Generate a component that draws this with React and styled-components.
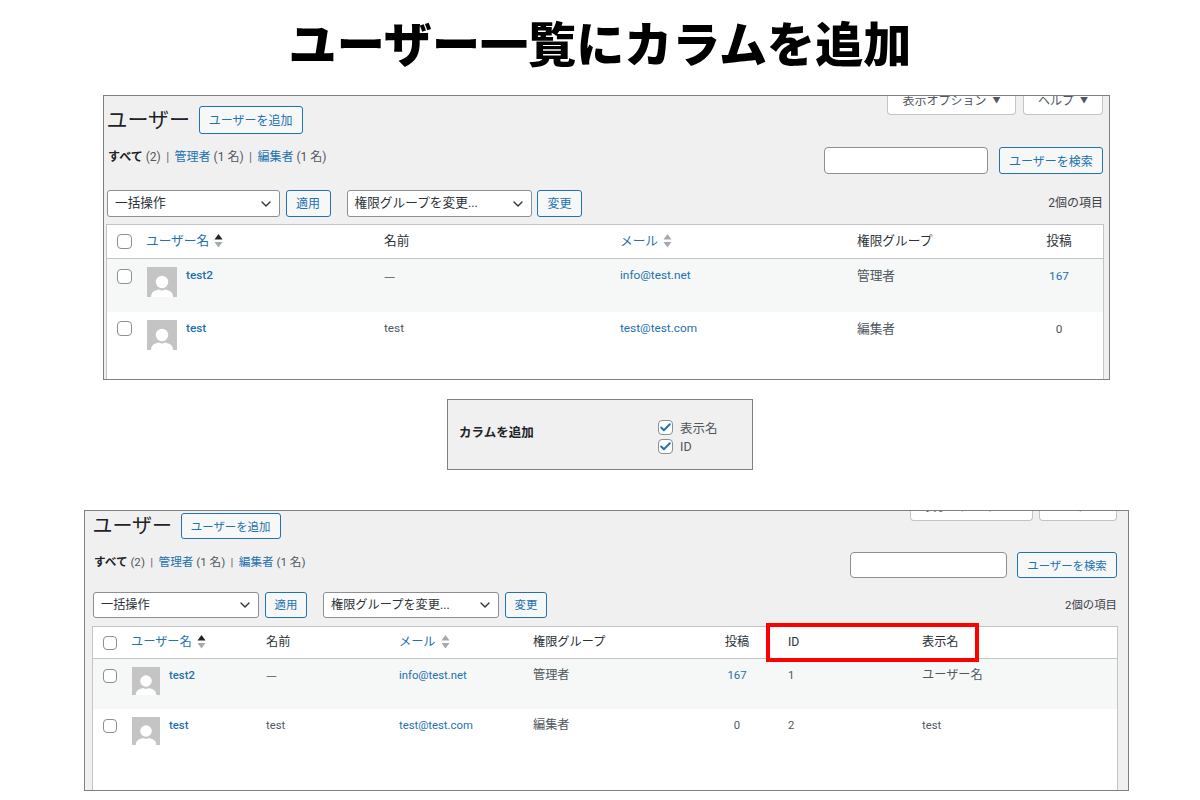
import { ThemeProvider, createGlobalStyle, styled } from "styled-components";
import { Check, ChevronDown } from "lucide-react";

const GlobalStyle = createGlobalStyle`
  html, body { margin: 0; padding: 0; background: #fff; }
  body { font-family: Roboto, "Noto Sans CJK JP", sans-serif; color: #50575e; }
`;

const large = {
  left: "103px", width: "1007px", height: "285px", padRight: "5px", padLeft: "2px",
  heading: "21px", top: "10px", ctl: "27px", addH: "28px", addW: "104px", headGap: "9px",
  font: "12.7px", latin: "11.8px", btn: "12px", filter: "12px", filterTop: "1px", navGap: "16px", tableGap: "7px",
  tabH: "19px", tabGap: "7px", tabs: ["129px", "80px"], inputW: "164px", searchW: "104px", searchGap: "11px",
  selects: ["173px", "185px"], applyW: "45px", btnGap: "5.5px", secondGap: "10.5px", selLift: "2px",
  cols: "39px 238px 236px 237px 158px 88px", headH: "34px", rowH: "52.5px", avatar: "30px", box: "15px",
};

const small = {
  left: "84px", width: "1045px", height: "281px", padRight: "10px", padLeft: "7px",
  heading: "20px", top: "2px", ctl: "26px", addH: "26px", addW: "100px", headGap: "9px",
  font: "12.2px", latin: "11.3px", btn: "11.4px", filter: "11.6px", filterTop: "1px", navGap: "14px", tableGap: "8px",
  tabH: "10px", tabGap: "6px", tabs: ["123px", "78px"], inputW: "157px", searchW: "100px", searchGap: "10px",
  selects: ["166px", "176px"], applyW: "42px", btnGap: "6px", secondGap: "10px", selLift: "0px",
  cols: "38px 135px 133px 134px 153px 102px 134px 1fr", headH: "32px", rowH: "50px", avatar: "28px", box: "14px",
};

const users = [
  { login: "test2", name: "—", email: "info@test.net", role: "管理者", posts: "167", id: "1", display: "ユーザー名" },
  { login: "test", name: "test", email: "test@test.com", role: "編集者", posts: "0", id: "2", display: "test" },
];

function Sort({ active }) {
  return (
    <SortIcon viewBox="0 0 9 14" aria-hidden="true">
      <path d="M4.5 0 8.5 5.500H.5z" fill={active ? "#1d2327" : "#a7aaad"} />
      <path d="M4.5 13.500.5 8h8z" fill="#a7aaad" />
    </SortIcon>
  );
}

function Avatar() {
  return (
    <AvatarIcon viewBox="0 0 30 30" aria-hidden="true">
      <rect width="30" height="30" fill="#c4c4c4" />
      <circle cx="15" cy="15" r="6.2" fill="#fff" />
      <path d="M4 30c0-3.500 1.500-5.500 4.500-6.500L12 22.500c2 1.200 4 1.200 6 0l3.500 1c3 1 4.500 3 4.500 6.500z" fill="#fff" />
    </AvatarIcon>
  );
}

function UserPanel({ metrics, extended }) {
  return (
    <ThemeProvider theme={metrics}>
      <Panel>
        <TopBar>
          <Heading>ユーザー</Heading>
          <AddButton>ユーザーを追加</AddButton>
          <Tabs>
            <Tab $width={metrics.tabs[0]}><span>表示オプション</span><Caret>▼</Caret></Tab>
            <Tab $width={metrics.tabs[1]}><span>ヘルプ</span><Caret>▼</Caret></Tab>
          </Tabs>
        </TopBar>

        <FilterRow>
          <Filters>
            <strong>すべて</strong> (2) <Sep>|</Sep> <Link>管理者</Link> (1 名) <Sep>|</Sep> <Link>編集者</Link> (1 名)
          </Filters>
          <SearchBox>
            <SearchInput />
            <ActionButton $width={metrics.searchW}>ユーザーを検索</ActionButton>
          </SearchBox>
        </FilterRow>

        <NavRow>
          <Select $width={metrics.selects[0]}>一括操作<ChevronDown size={16} strokeWidth={2} /></Select>
          <ActionButton $width={metrics.applyW}>適用</ActionButton>
          <Select $width={metrics.selects[1]} $second>権限グループを変更...<ChevronDown size={16} strokeWidth={2} /></Select>
          <ActionButton $width={metrics.applyW}>変更</ActionButton>
          <Count>2個の項目</Count>
        </NavRow>

        <Table>
          <HeadRow>
            <HeadCheckCell><Box /></HeadCheckCell>
            <SortLink>ユーザー名<Sort active /></SortLink>
            <span>名前</span>
            <SortLink>メール<Sort /></SortLink>
            <span>権限グループ</span>
            <CenterCell>投稿</CenterCell>
            {extended && <span>ID</span>}
            {extended && <span>表示名</span>}
            {extended && <Highlight />}
          </HeadRow>
          {users.map((u, i) => (
            <Row key={u.login} $striped={i === 0}>
              <RowCheckCell><Box /></RowCheckCell>
              <UserCell>
                <Avatar />
                <Login>{u.login}</Login>
              </UserCell>
              {u.name === "—" ? <Dash>—</Dash> : <Latin>{u.name}</Latin>}
              <Latin $link>{u.email}</Latin>
              <span>{u.role}</span>
              <CenterCell><Latin $link={u.posts !== "0"}>{u.posts}</Latin></CenterCell>
              {extended && <Latin>{u.id}</Latin>}
              {extended && (u.id === "1" ? <span>{u.display}</span> : <Latin>{u.display}</Latin>)}
            </Row>
          ))}
        </Table>
      </Panel>
    </ThemeProvider>
  );
}

function App() {
  return (
    <>
      <GlobalStyle />
      <Page>
        <Title>ユーザー一覧にカラムを追加</Title>
        <UserPanel metrics={large} />
        <Settings>
          <SettingsLabel>カラムを追加</SettingsLabel>
          <Options>
            <Option><CheckedBox><Check size={13} strokeWidth={3.5} /></CheckedBox>表示名</Option>
            <Option><CheckedBox><Check size={13} strokeWidth={3.5} /></CheckedBox>ID</Option>
          </Options>
        </Settings>
        <SpacedPanel>
          <UserPanel metrics={small} extended />
        </SpacedPanel>
      </Page>
    </>
  );
}

const Page = styled.div`
  width: 1200px;
  height: 800px;
  overflow: hidden;
  background: #fff;
`;
const Title = styled.h1`
  box-sizing: border-box;
  height: 95px;
  margin: 0;
  padding: 0 0 13px 0;
  display: flex;
  align-items: center;
  justify-content: center;
  font-family: "Noto Sans CJK JP", sans-serif;
  font-size: 48.1px;
  font-weight: 900;
  color: #000;
  line-height: 1;
`;
const Panel = styled.section`
  box-sizing: border-box;
  width: ${({ theme }) => theme.width};
  height: ${({ theme }) => theme.height};
  margin-left: ${({ theme }) => theme.left};
  padding: 0 ${({ theme }) => theme.padRight} 0 ${({ theme }) => theme.padLeft};
  display: flex;
  flex-direction: column;
  overflow: hidden;
  background: #f0f0f1;
  border: 1px solid #808080;
  font-size: ${({ theme }) => theme.font};
`;
const SpacedPanel = styled.div`
  margin-top: 40px;
`;
const TopBar = styled.div`
  display: flex;
  align-items: flex-start;
  padding: 0 1px;
`;
const Heading = styled.h2`
  margin: ${({ theme }) => theme.top} -0.5px 0 -0.5px;
  font-size: ${({ theme }) => theme.heading};
  font-weight: 400;
  line-height: ${({ theme }) => theme.addH};
  color: #1d2327;
`;
const Button = styled.div`
  box-sizing: border-box;
  display: flex;
  align-items: center;
  justify-content: center;
  flex-shrink: 0;
  background: #f6f7f7;
  border: 1px solid #2271b1;
  border-radius: 3px;
  color: #2271b1;
  font-size: ${({ theme }) => theme.btn};
`;
const AddButton = styled(Button)`
  width: ${({ theme }) => theme.addW};
  height: ${({ theme }) => theme.addH};
  margin: ${({ theme }) => theme.top} 0 0 ${({ theme }) => theme.headGap};
  padding-bottom: 1px;
`;
const ActionButton = styled(Button)`
  width: ${({ $width }) => $width};
  height: ${({ theme }) => theme.ctl};
`;
const Tabs = styled.div`
  display: flex;
  gap: ${({ theme }) => theme.tabGap};
  margin-left: auto;
`;
const Tab = styled.div`
  box-sizing: border-box;
  width: ${({ $width }) => $width};
  height: ${({ theme }) => theme.tabH};
  padding-bottom: 4px;
  display: flex;
  align-items: flex-end;
  justify-content: center;
  gap: 6px;
  overflow: hidden;
  background: #fff;
  border: 1px solid #c3c4c7;
  border-top: 0;
  border-radius: 0 0 4px 4px;
  font-size: ${({ theme }) => theme.btn};
  line-height: 18px;
  white-space: nowrap;
  span { flex-shrink: 0; }
`;
const Caret = styled.span`
  font-size: 8px;
`;
const FilterRow = styled.div`
  display: flex;
  justify-content: space-between;
  align-items: flex-start;
  margin-top: 13px;
  padding: 0 1px;
`;
const Filters = styled.div`
  padding: ${({ theme }) => theme.filterTop} 0 0 1px;
  font-size: ${({ theme }) => theme.filter};
  line-height: 18px;
  strong { color: #1d2327; font-weight: 700; }
`;
const Sep = styled.span`
  margin: 0 2.5px;
  color: #646970;
`;
const Link = styled.span`
  color: #2271b1;
`;
const SearchBox = styled.div`
  display: flex;
  gap: ${({ theme }) => theme.searchGap};
`;
const SearchInput = styled.div`
  box-sizing: border-box;
  width: ${({ theme }) => theme.inputW};
  height: ${({ theme }) => theme.ctl};
  background: #fff;
  border: 1px solid #8c8f94;
  border-radius: 4px;
`;
const NavRow = styled.div`
  display: flex;
  align-items: center;
  gap: ${({ theme }) => theme.btnGap};
  margin-top: ${({ theme }) => theme.navGap};
  padding: 0 1px;
  line-height: 18px;
`;
const Select = styled.div`
  box-sizing: border-box;
  width: ${({ $width }) => $width};
  height: ${({ theme }) => theme.ctl};
  margin-left: ${({ $second, theme }) => ($second ? theme.secondGap : "0")};
  padding: 0 10px ${({ theme }) => theme.selLift} 7px;
  display: flex;
  align-items: center;
  justify-content: space-between;
  background: #fff;
  border: 1px solid #8c8f94;
  border-radius: 3px;
  color: #2c3338;
  svg { flex-shrink: 0; margin: ${({ theme }) => theme.selLift} -5px 0 0; color: #2c3338; }
`;
const Count = styled.div`
  margin-left: auto;
  padding-bottom: ${({ theme }) => theme.selLift};
  color: #3c434a;
  font-size: ${({ theme }) => theme.btn};
`;
const Table = styled.div`
  flex: 1;
  margin-top: ${({ theme }) => theme.tableGap};
  background: #fff;
  border: 1px solid #c3c4c7;
  border-bottom: 0;
  color: #50575e;
`;
const HeadRow = styled.div`
  box-sizing: border-box;
  position: relative;
  display: grid;
  grid-template-columns: ${({ theme }) => theme.cols};
  align-items: center;
  height: ${({ theme }) => theme.headH};
  padding-bottom: 2px;
  line-height: 18px;
  border-bottom: 1px solid #c3c4c7;
  color: #2c3338;
`;
const Row = styled.div`
  box-sizing: border-box;
  display: grid;
  grid-template-columns: ${({ theme }) => theme.cols};
  align-items: start;
  height: ${({ theme }) => theme.rowH};
  padding-top: 8px;
  line-height: 17px;
  background: ${({ $striped }) => ($striped ? "#f6f7f7" : "#fff")};
`;
const CheckCell = styled.div`
  display: flex;
  padding-left: 10px;
`;
const HeadCheckCell = styled(CheckCell)`
  margin-top: 2px;
`;
const RowCheckCell = styled(CheckCell)`
  margin-top: 1.5px;
`;
const Box = styled.span`
  box-sizing: border-box;
  display: inline-flex;
  align-items: center;
  justify-content: center;
  width: ${({ theme }) => theme.box};
  height: ${({ theme }) => theme.box};
  background: #fff;
  border: 1px solid #8c8f94;
  border-radius: 4px;
  flex-shrink: 0;
`;
const SortLink = styled.span`
  display: flex;
  align-items: center;
  gap: 5px;
  color: #2271b1;
`;
const SortIcon = styled.svg`
  width: 9px;
  height: 14px;
`;
const CenterCell = styled.span`
  text-align: center;
`;
const Latin = styled.span`
  font-size: ${({ theme }) => theme.latin};
  color: ${({ $link }) => ($link ? "#2271b1" : "inherit")};
`;
const Dash = styled.span`
  font-family: "Noto Sans CJK JP", sans-serif;
`;
const UserCell = styled.div`
  display: flex;
  gap: 9px;
  padding-left: 1px;
`;
const AvatarIcon = styled.svg`
  width: ${({ theme }) => theme.avatar};
  height: ${({ theme }) => theme.avatar};
  flex-shrink: 0;
`;
const Login = styled.span`
  color: #2271b1;
  font-size: ${({ theme }) => theme.latin};
  font-weight: 500;
`;
const Highlight = styled.div`
  position: absolute;
  left: 673px;
  top: -4px;
  box-sizing: border-box;
  width: 213px;
  height: 39px;
  border: 4px solid #ff0000;
`;
const Settings = styled.section`
  box-sizing: border-box;
  width: 306px;
  height: 71px;
  margin: 19px 0 0 447px;
  padding-left: 11px;
  display: flex;
  align-items: center;
  background: #f0f0f1;
  border: 1px solid #808080;
`;
const SettingsLabel = styled.div`
  width: 199px;
  padding-bottom: 6px;
  color: #1d2327;
  font-size: 12.5px;
  font-weight: 700;
`;
const Options = styled.div`
  display: flex;
  flex-direction: column;
  gap: 4px;
  padding-top: 5px;
`;
const Option = styled.div`
  display: flex;
  align-items: center;
  gap: 7px;
  height: 15px;
  color: #50575e;
  font-size: 12.5px;
`;
const CheckedBox = styled(Box)`
  width: 15px;
  height: 15px;
  color: #2271b1;
`;

export default App;
